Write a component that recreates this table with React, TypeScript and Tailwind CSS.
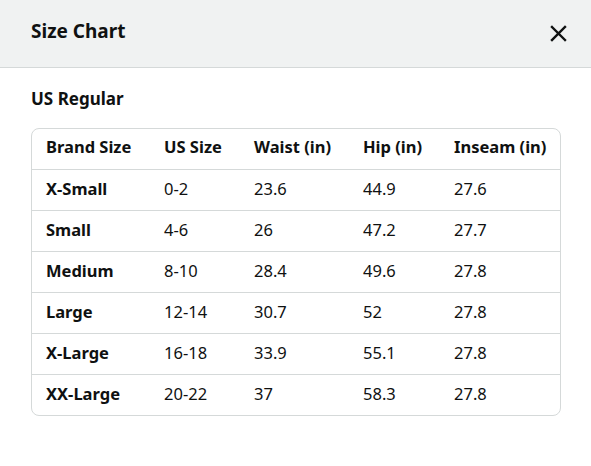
import React from "react";

const rows = [
	["X-Small", "0-2", "23.6", "44.9", "27.6"],
	["Small", "4-6", "26", "47.2", "27.7"],
	["Medium", "8-10", "28.4", "49.6", "27.8"],
	["Large", "12-14", "30.7", "52", "27.8"],
	["X-Large", "16-18", "33.9", "55.1", "27.8"],
	["XX-Large", "20-22", "37", "58.3", "27.8"],
];

const headers = ["Brand Size", "US Size", "Waist (in)", "Hip (in)", "Inseam (in)"];
const widths = ["w-[132px]", "w-[90px]", "w-[109px]", "w-[91px]", ""];

const App: React.FC = () => {
	return (
		<div className="w-[591px] h-[466px] bg-white text-[#0f1111] font-['Noto_Sans',sans-serif]">
			{/* Modal header */}
			<div className="h-[68px] bg-[#f0f2f2] border-b border-[#d5d9d9] flex items-center justify-between pl-[31px] pr-[24px]">
				<h1 className="text-[19px] font-bold leading-none -mt-[4px]">Size Chart</h1>
				<button className="text-[#0f1111]" aria-label="Close">
					<svg width="17" height="17" viewBox="0 0 17 17" fill="none" stroke="currentColor" strokeWidth="2.4" strokeLinecap="square">
						<path d="M2 2L15 15M15 2L2 15" />
					</svg>
				</button>
			</div>

			<div className="px-[31px] pt-[20px]">
				<h2 className="text-[17px] font-bold leading-[22px] mb-[18px]">US Regular</h2>

				<div className="w-[530px] border border-[#d5d9d9] rounded-[8px] overflow-hidden">
					<table className="w-full border-collapse text-[16.5px]">
						<thead>
							<tr className="h-[40px]">
								{headers.map((h, i) => (
									<th key={h} className={`${widths[i]} text-left font-bold pb-[2px] ${i === 0 ? "pl-[14px]" : ""}`}>
										{h}
									</th>
								))}
							</tr>
						</thead>
						<tbody>
							{rows.map((r) => (
								<tr key={r[0]} className="h-[41px] border-t border-[#d5d9d9]">
									{r.map((c, i) => (
										<td key={i} className={i === 0 ? "pl-[14px] font-bold" : ""}>
											{c}
										</td>
									))}
								</tr>
							))}
						</tbody>
					</table>
				</div>
			</div>
		</div>
	);
};

export default App;
